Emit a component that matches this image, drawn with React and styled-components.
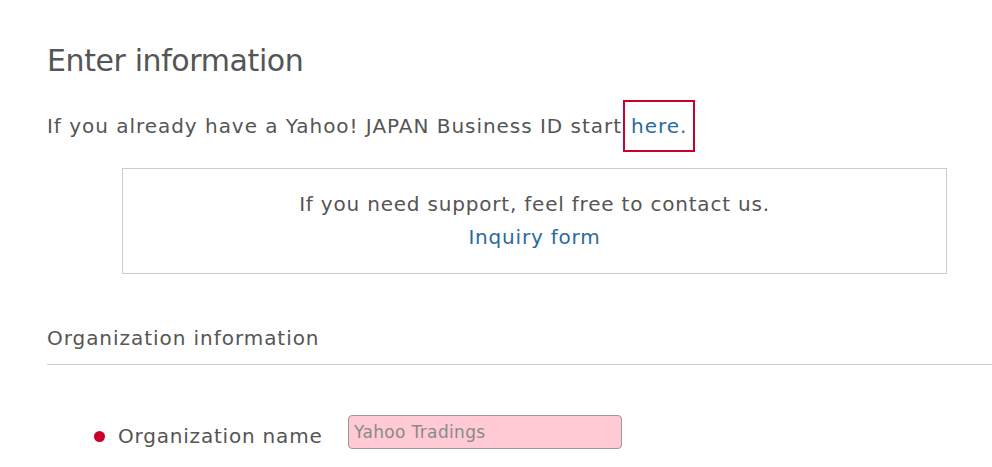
import React from 'react'
import styled, { createGlobalStyle } from 'styled-components'

const GlobalStyle = createGlobalStyle`
body {
  margin: 0;
  background: #fff;
  font-family: "DejaVu Sans", Verdana, sans-serif;
  color: #555;
}
`

const Page = styled.div`
padding: 40px 0 0 47px;
`

const Title = styled.h1`
margin: 0;
font-size: 30px;
font-weight: normal;
letter-spacing: -0.4px;
line-height: 42px;
color: #555;
`

const Lead = styled.p`
margin: 18px 0 0;
font-size: 20px;
letter-spacing: 0.97px;
line-height: 50px;
display: flex;
align-items: center;
`

const Link = styled.a`
color: #2b6a9e;
text-decoration: none;
cursor: pointer;
`

const Highlight = styled.span`
display: inline-flex;
align-items: center;
height: 52px;
margin-left: 1px;
padding: 0 6px 0 6px;
border: 2px solid #c8002a;
box-sizing: border-box;
`

const SupportBox = styled.div`
margin: 16px 45px 0 75px;
height: 106px;
border: 1px solid #ccc;
box-sizing: border-box;
display: flex;
flex-direction: column;
align-items: center;
justify-content: center;
font-size: 20px;
letter-spacing: 0.8px;
line-height: 33px;
`

const SectionTitle = styled.h2`
margin: 49px 0 0;
padding-bottom: 11px;
font-size: 20px;
letter-spacing: 0.95px;
font-weight: normal;
line-height: 30px;
border-bottom: 1px solid #ccc;
`

const FieldRow = styled.div`
display: flex;
align-items: center;
margin: 50px 0 0 47px;
`

const Dot = styled.span`
width: 11px;
height: 11px;
border-radius: 50%;
background: #c8002a;
margin: 8px 13px 0 0;
`

const Label = styled.label`
font-size: 20px;
letter-spacing: 0.8px;
width: 230px;
margin-top: 7px;
`

const Input = styled.input`
width: 274px;
height: 34px;
box-sizing: border-box;
background: #ffcad3;
border: 1px solid #999;
border-radius: 4px;
padding: 0 5px;
font-family: "DejaVu Sans", Verdana, sans-serif;
font-size: 17px;
letter-spacing: 0.35px;
color: #555;
&::placeholder {
  color: #8a8a8a;
}
`

export default function App() {
  return (
    <>
      <GlobalStyle />
      <Page>
        <Title>Enter information</Title>
        <Lead>
          If you already have a Yahoo! JAPAN Business ID start
          <Highlight><Link>here.</Link></Highlight>
        </Lead>
        <SupportBox>
          <div>If you need support, feel free to contact us.</div>
          <Link>Inquiry form</Link>
        </SupportBox>
        <SectionTitle>Organization information</SectionTitle>
        <FieldRow>
          <Dot />
          <Label>Organization name</Label>
          <Input placeholder="Yahoo Tradings" />
        </FieldRow>
      </Page>
    </>
  )
}
